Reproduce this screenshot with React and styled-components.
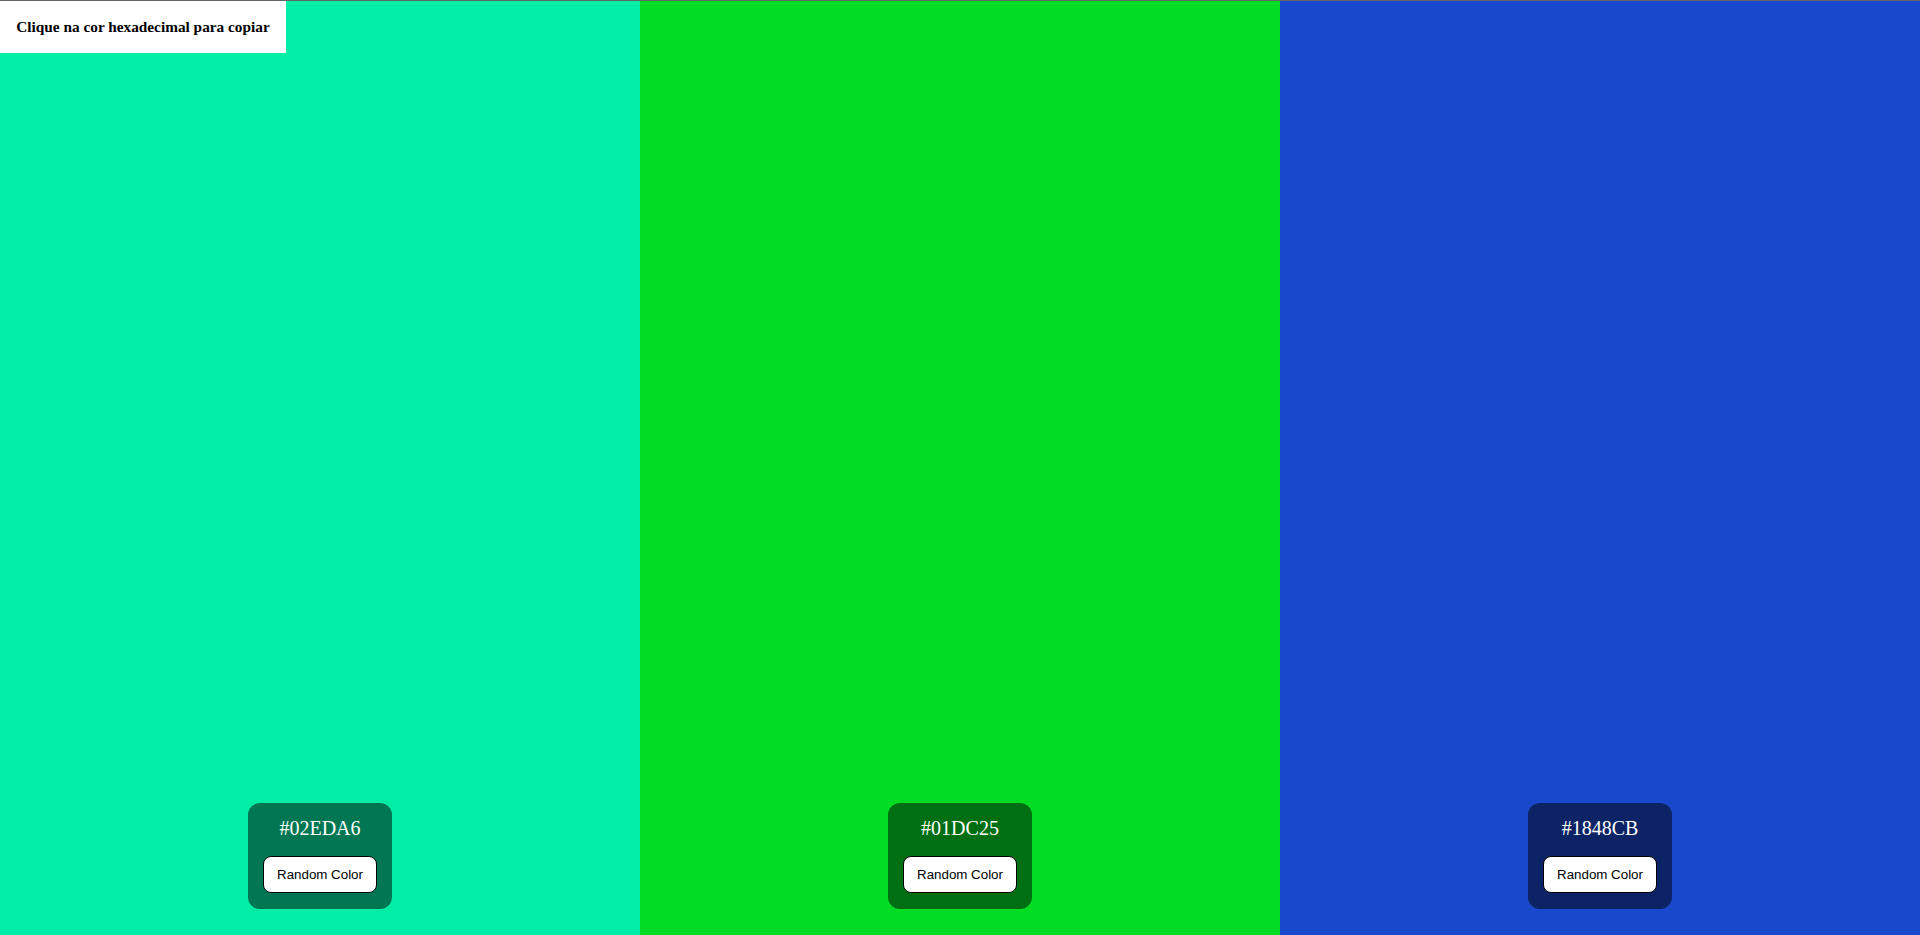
import React, { useState } from 'react'
import styled, { createGlobalStyle } from 'styled-components'

const GlobalStyle = createGlobalStyle`
  html, body {
    margin: 0;
    padding: 0;
    overflow: hidden;
  }
`

const initialColors = ['#02EDA6', '#01DC25', '#1848CB']

function randomHex() {
  return (
    '#' +
    Math.floor(Math.random() * 0xffffff)
      .toString(16)
      .padStart(6, '0')
      .toUpperCase()
  )
}

function Panel({ color, onRandom }) {
  return (
    <Column bg={color}>
      <Card>
        <Hex onClick={() => navigator.clipboard && navigator.clipboard.writeText(color)}>{color}</Hex>
        <RandomButton onClick={onRandom}>Random Color</RandomButton>
      </Card>
    </Column>
  )
}

export default function App() {
  const [colors, setColors] = useState(initialColors)

  const change = i => {
    setColors(prev => prev.map((c, idx) => (idx === i ? randomHex() : c)))
  }

  return (
    <Page>
      <GlobalStyle />
      <Hint>Clique na cor hexadecimal para copiar</Hint>
      {colors.map((c, i) => (
        <Panel key={i} color={c} onRandom={() => change(i)} />
      ))}
    </Page>
  )
}

const Page = styled.div`
  position: relative;
  display: flex;
  flex-direction: row;
  height: 100vh;
  box-sizing: border-box;
  border-top: 1px solid #666666;
`

const Hint = styled.div`
  position: absolute;
  top: 0;
  left: 0;
  width: 286px;
  height: 52px;
  box-sizing: border-box;
  display: flex;
  align-items: center;
  justify-content: center;
  background: #ffffff;
  color: #000000;
  font-family: 'Liberation Serif', 'Times New Roman', serif;
  font-weight: bold;
  font-size: 15.3px;
`

const Column = styled.div`
  flex: 1;
  display: flex;
  flex-direction: column;
  justify-content: flex-end;
  align-items: center;
  padding-bottom: 26px;
  background: ${props => props.bg};
`

const Card = styled.div`
  width: 144px;
  height: 106px;
  box-sizing: border-box;
  padding: 0 15px 16px;
  display: flex;
  flex-direction: column;
  align-items: center;
  justify-content: space-between;
  border-radius: 12px;
  background: rgba(0, 0, 0, 0.5);
`

const Hex = styled.p`
  margin: 0;
  padding-top: 12px;
  font-family: 'Liberation Serif', 'Times New Roman', serif;
  font-size: 20px;
  line-height: 26px;
  color: #ffffff;
  cursor: pointer;
`

const RandomButton = styled.button`
  width: 114px;
  height: 37px;
  background: #ffffff;
  border: 1px solid #000000;
  border-radius: 8px;
  font-family: 'Liberation Sans', Arial, sans-serif;
  font-size: 13.33px;
  color: #000000;
  cursor: pointer;
`
